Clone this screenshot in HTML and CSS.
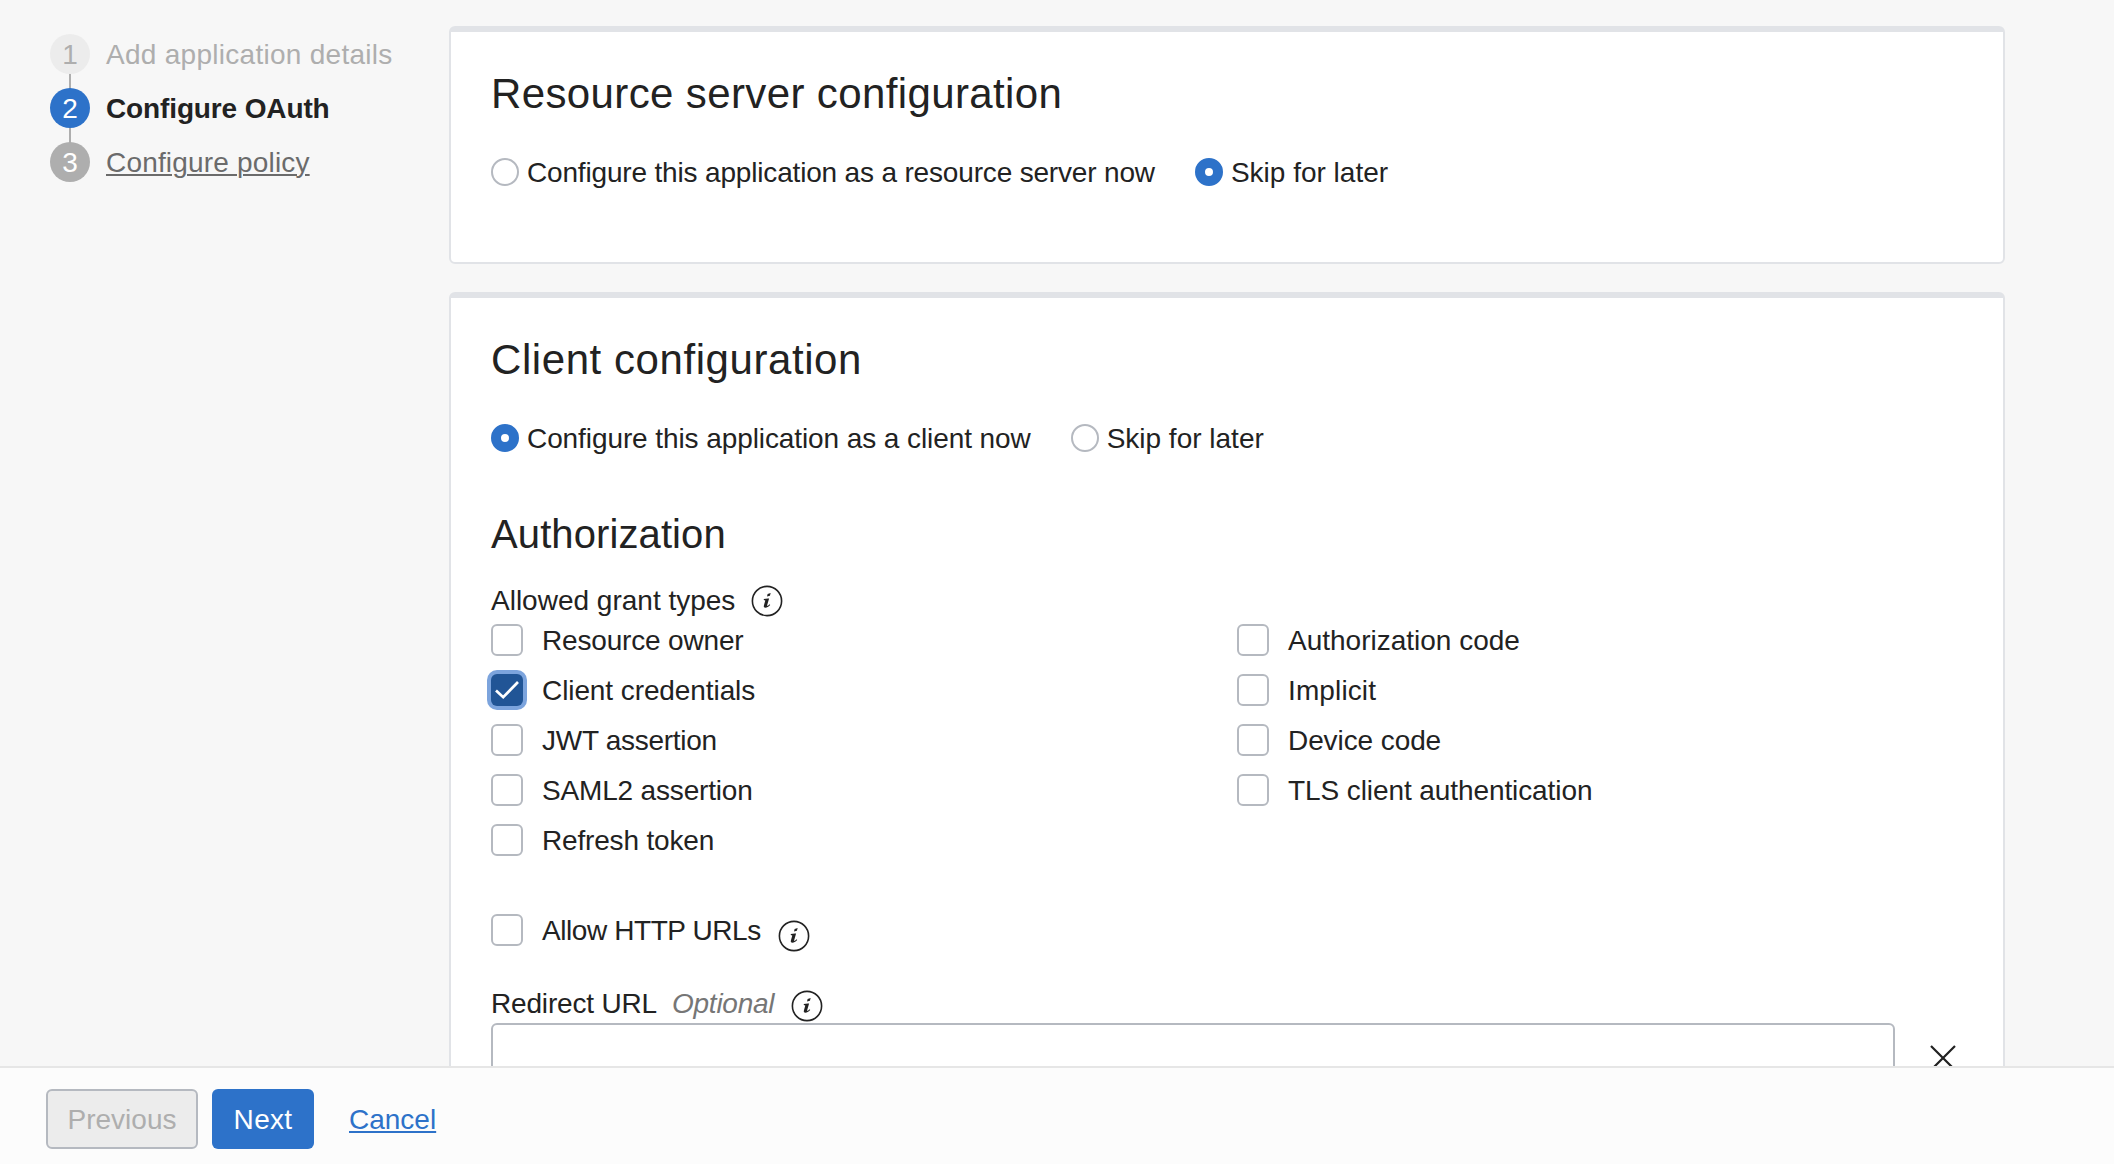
FILE: index.html
```html
<!DOCTYPE html>
<html lang="en">
<head>
<meta charset="utf-8">
<title>Configure OAuth</title>
<link rel="stylesheet" href="styles.css">
</head>
<body>
<svg class="defs" width="0" height="0" aria-hidden="true">
  <symbol id="info" viewBox="0 0 32 32">
    <circle cx="16" cy="16" r="14.600" fill="none" stroke="currentColor" stroke-width="1.600"/>
    <path d="M16.600 8.900l3.100-1-.8 2.800-2.900.7z" fill="currentColor"/>
    <path d="M12.800 14.100l4-.6h1.300l-1.900 6.500c-.2.900.1 1.100.7.800l1.800-1.500.5.700c-1.700 1.700-3.300 2.700-4.800 2.700-1.400 0-1.900-.8-1.500-2.200l1.400-5-1.500-.4z" fill="currentColor"/>
  </symbol>
</svg>
<div class="workspace">
  <nav class="steps">
    <ol class="step-list">
      <li class="step step-done"><span class="step-num">1</span><span class="step-label">Add application details</span></li>
      <li class="step step-current"><span class="step-num">2</span><span class="step-label">Configure OAuth</span></li>
      <li class="step step-next"><span class="step-num">3</span><a class="step-label">Configure policy</a></li>
    </ol>
  </nav>
  <main class="cards">
    <section class="card card-resource">
      <h2 class="card-title">Resource server configuration</h2>
      <div class="radio-row">
        <label class="radio"><span class="dot"></span><span class="label-text tight">Configure this application as a resource server now</span></label>
        <label class="radio"><span class="dot dot-on"></span><span class="label-text">Skip for later</span></label>
      </div>
    </section>
    <section class="card">
      <h2 class="card-title card-title-wide">Client configuration</h2>
      <div class="radio-row">
        <label class="radio"><span class="dot dot-on"></span><span class="label-text snug">Configure this application as a client now</span></label>
        <label class="radio"><span class="dot"></span><span class="label-text">Skip for later</span></label>
      </div>
      <h3 class="section-title">Authorization</h3>
      <div class="field-label grant-label"><span class="label-text">Allowed grant types</span><svg class="info"><use href="#info"/></svg></div>
      <div class="grants">
        <div class="grant-col">
          <label class="check"><span class="box"></span><span class="label-text tight">Resource owner</span></label>
          <label class="check"><span class="box box-on"><svg viewBox="0 0 32 32" class="tick"><path d="M5 16.500l7.200 6.700L27 8" fill="none" stroke="#fff" stroke-width="2.700"/></svg></span><span class="label-text snug">Client credentials</span></label>
          <label class="check"><span class="box"></span><span class="label-text tighter">JWT assertion</span></label>
          <label class="check"><span class="box"></span><span class="label-text tight">SAML2 assertion</span></label>
          <label class="check"><span class="box"></span><span class="label-text tight">Refresh token</span></label>
        </div>
        <div class="grant-col">
          <label class="check"><span class="box"></span><span class="label-text">Authorization code</span></label>
          <label class="check"><span class="box"></span><span class="label-text loose">Implicit</span></label>
          <label class="check"><span class="box"></span><span class="label-text snug">Device code</span></label>
          <label class="check"><span class="box"></span><span class="label-text snug">TLS client authentication</span></label>
        </div>
      </div>
      <div class="check check-http"><span class="box"></span><span class="label-text tightest">Allow HTTP URLs</span><svg class="info info-low"><use href="#info"/></svg></div>
      <div class="field-label url-label"><span class="label-text tight">Redirect URL</span><em class="optional">Optional</em><svg class="info info-url"><use href="#info"/></svg></div>
      <div class="url-row">
        <input class="url-input" type="text" aria-label="Redirect URL">
        <svg class="remove" viewBox="0 0 26 26"><path d="M1 1l24 24M25 1L1 25" fill="none" stroke="#222" stroke-width="2.200"/></svg>
      </div>
    </section>
  </main>
</div>
<footer class="actions">
  <button class="btn btn-disabled" disabled>Previous</button>
  <button class="btn btn-primary">Next</button>
  <a class="cancel">Cancel</a>
</footer>
</body>
</html>
```

FILE: styles.css
```css
* { box-sizing: border-box; }

body {
  margin: 0;
  height: 1164px;
  overflow: hidden;
  display: flex;
  flex-direction: column;
  background: #f7f7f7;
  color: #222;
  font: 28px/40px "Liberation Sans", Arial, sans-serif;
}

.defs { position: absolute; }

.workspace {
  flex: 1;
  min-height: 0;
  overflow: hidden;
  display: flex;
  align-items: flex-start;
}

/* Wizard steps */
.steps { width: 449px; flex: none; padding: 34px 0 0 50px; }
.step-list {
  list-style: none;
  margin: 0;
  padding: 0;
  display: flex;
  flex-direction: column;
  gap: 14px;
  background: linear-gradient(#aeaeae, #aeaeae) 19px 20px / 2px 108px no-repeat;
}
.step { display: flex; gap: 16px; height: 40px; }
.step-num {
  width: 40px;
  height: 40px;
  padding-top: 1px;
  border-radius: 50%;
  text-align: center;
}
.step-label { padding-top: 1px; letter-spacing: 0.28px; }
.step-done { color: #aeaeae; }
.step-done .step-num { background: #ececec; }
.step-current .step-num { background: #2d72c9; color: #fff; }
.step-current .step-label { font-weight: bold; letter-spacing: -0.13px; }
.step-next .step-num { background: #aeaeae; color: #fff; }
.step-next .step-label {
  color: #6b6b6b;
  letter-spacing: 0.18px;
  text-decoration: underline;
  text-decoration-thickness: 2px;
  text-underline-offset: 2px;
}

/* Cards */
.cards { width: 1556px; flex: none; padding-top: 26px; display: flex; flex-direction: column; gap: 28px; }
.card {
  padding: 37px 40px 60px;
  border: 2px solid #e1e3e7;
  border-top-width: 6px;
  border-radius: 6px;
  background: #fff;
}
.card-resource { height: 238px; }
.card-title { margin: 0; font-size: 42px; line-height: 50px; font-weight: normal; letter-spacing: 0.38px; }
.card-title-wide { letter-spacing: 0.57px; }
.section-title { margin: 51px 0 0; font-size: 40px; line-height: 48px; font-weight: normal; letter-spacing: 0.1px; }

.label-text { padding-top: 2px; white-space: nowrap; }
.loose { letter-spacing: 0.12px; }
.snug { letter-spacing: -0.09px; }
.tight { letter-spacing: -0.17px; }
.tighter { letter-spacing: -0.27px; }
.tightest { letter-spacing: -0.42px; }

/* Radios */
.radio-row { display: flex; gap: 40px; height: 42px; margin-top: 32px; }
.radio { display: flex; align-items: center; gap: 8px; }
.dot { width: 28px; height: 28px; border: 2px solid #b5b9c0; border-radius: 50%; background: #fff; }
.dot-on { border: 10px solid #2d72c9; }

/* Checkboxes */
.grants { display: grid; grid-template-columns: 746px 1fr; }
.grant-col { display: flex; flex-direction: column; gap: 12px; }
.check { display: flex; align-items: center; height: 38px; gap: 19px; }
.box { width: 32px; height: 32px; flex: none; border: 2px solid #b5b9c0; border-radius: 6px; background: #fff; }
.box-on { border: 0; background: #215596; box-shadow: 0 0 0 4px #7ca4dd; }
.tick { display: block; width: 32px; height: 32px; }
.check-http { margin-top: 52px; }

/* Field labels */
.field-label { display: flex; align-items: center; height: 40px; }
.grant-label { margin-top: 23px; }
.grant-label .label-text { padding-top: 0; }
.url-label { margin-top: 34px; }
.info { width: 32px; height: 32px; flex: none; margin-left: 16px; }
.info-low { margin: 12px 0 0 -2px; }
.info-url { margin: 6px 0 0 17px; }
.optional { margin-left: 15px; padding-top: 2px; color: #767676; letter-spacing: -0.25px; }

.url-row { display: flex; align-items: center; gap: 35px; }
.url-input { width: 1404px; height: 70px; border: 2px solid #b5b9c0; border-radius: 6px; background: #fff; }
.remove { width: 26px; height: 26px; }

/* Bottom bar */
.actions {
  height: 98px;
  flex: none;
  display: flex;
  align-items: flex-start;
  padding: 21px 46px 0;
  border-top: 2px solid #e6e6e6;
  background: #fcfcfc;
}
.btn {
  height: 60px;
  padding: 2px 0 0;
  border: 0;
  border-radius: 6px;
  font: inherit;
}
.btn-disabled { width: 152px; border: 2px solid #b5b9c0; background: #ececec; color: #aeaeae; }
.btn-primary { width: 102px; margin-left: 14px; background: #2d72c9; color: #fff; letter-spacing: 0.3px; }
.cancel {
  margin: 11px 0 0 35px;
  color: #2d72c9;
  text-decoration: underline;
  text-decoration-thickness: 2px;
  text-underline-offset: 2px;
}
```
